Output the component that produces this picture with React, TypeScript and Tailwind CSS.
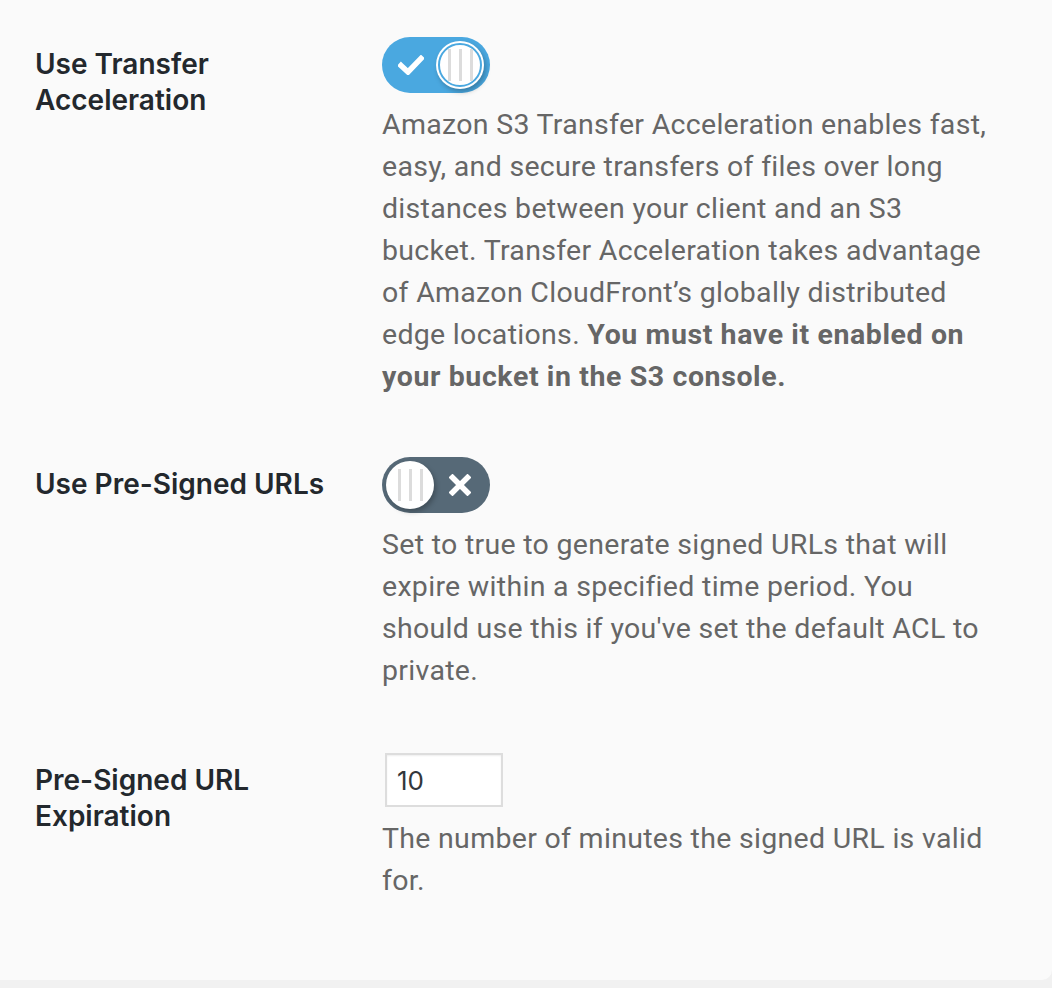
import type { ReactNode } from 'react';

const labelFont = { fontFamily: 'Inter, "Liberation Sans", sans-serif' };
const bodyFont = { fontFamily: 'Roboto, "Liberation Sans", sans-serif' };

const KnobLines = () => (
  <div className="flex h-full w-full items-center justify-center gap-[8px]">
    <span className="h-[32px] w-[3px] bg-[#dcdcdc]" />
    <span className="h-[32px] w-[3px] bg-[#dcdcdc]" />
    <span className="h-[32px] w-[3px] bg-[#dcdcdc]" />
  </div>
);

const Toggle = ({ on }: { on: boolean }) => (
  <div
    className={
      on
        ? 'relative h-[56px] w-[108px] rounded-full bg-[#4aa8e0]'
        : 'relative h-[56px] w-[108px] rounded-full bg-[#566977]'
    }
  >
    {on ? (
      <svg
        className="absolute left-[16px] top-[18px]"
        width="26"
        height="20"
        viewBox="0 0 26 20"
        fill="none"
      >
        <path
          d="M3 10.5 L10 17 L23 3.5"
          stroke="white"
          strokeWidth="5.5"
          strokeLinecap="square"
        />
      </svg>
    ) : (
      <svg
        className="absolute left-[67px] top-[17px]"
        width="22"
        height="22"
        viewBox="0 0 22 22"
        fill="none"
      >
        <path
          d="M3.5 3.5 L18.5 18.5 M18.5 3.5 L3.5 18.5"
          stroke="white"
          strokeWidth="5.5"
          strokeLinecap="square"
        />
      </svg>
    )}
    <div
      className={
        on
          ? 'absolute left-[54px] top-[4px] h-[48px] w-[48px] rounded-full bg-white p-[2px] shadow-[2px_3px_5px_rgba(0,0,0,0.25)]'
          : 'absolute left-[4px] top-[4px] h-[48px] w-[48px] rounded-full bg-white shadow-[2px_3px_5px_rgba(0,0,0,0.25)]'
      }
    >
      {on ? (
        <div className="h-full w-full rounded-full border-[2.5px] border-[#4aa8e0] bg-white">
          <KnobLines />
        </div>
      ) : (
        <KnobLines />
      )}
    </div>
  </div>
);

const Row = ({
  label,
  control,
  children,
  className,
}: {
  label: ReactNode;
  control: ReactNode;
  children: ReactNode;
  className?: string;
}) => (
  <div className={`flex ${className ?? ''}`}>
    <div
      className="w-[382px] shrink-0 pl-[35px] pt-[9px] text-[28px] font-semibold leading-[36px] text-[#23282d]"
      style={labelFont}
    >
      {label}
    </div>
    <div className="flex flex-col">
      {control}
      <p
        className="mt-[11px] whitespace-nowrap text-[28.5px] leading-[42px] tracking-[0.3px] text-[#666666]"
        style={bodyFont}
      >
        {children}
      </p>
    </div>
  </div>
);

export default function App() {
  return (
    <div className="min-h-screen bg-[#f1f1f1]">
      <div className="rounded-br-[10px] bg-[#fafafa] pb-[78px] pt-[37px]">
        <Row
          label={
            <>
              Use Transfer
              <br />
              Acceleration
            </>
          }
          control={<Toggle on />}
        >
          Amazon S3 Transfer Acceleration enables fast,
          <br />
          easy, and secure transfers of files over long
          <br />
          distances between your client and an S3
          <br />
          bucket. Transfer Acceleration takes advantage
          <br />
          of Amazon CloudFront’s globally distributed
          <br />
          edge locations.{' '}
          <strong className="font-bold tracking-[0.6px]">You must have it enabled on</strong>
          <br />
          <strong className="font-bold tracking-[0.6px]">your bucket in the S3 console.</strong>
        </Row>

        <Row
          className="mt-[59px]"
          label="Use Pre-Signed URLs"
          control={<Toggle on={false} />}
        >
          Set to true to generate signed URLs that will
          <br />
          expire within a specified time period. You
          <br />
          should use this if you've set the default ACL to
          <br />
          private.
        </Row>

        <Row
          className="mt-[61px]"
          label={
            <>
              Pre-Signed URL
              <br />
              Expiration
            </>
          }
          control={
            <input
              type="text"
              defaultValue="10"
              className="ml-[3px] h-[54px] w-[118px] border-2 border-[#dddddd] bg-white px-[10px] text-[26px] text-[#32373c] shadow-[inset_0_1px_2px_rgba(0,0,0,0.07)] outline-none"
              style={labelFont}
            />
          }
        >
          The number of minutes the signed URL is valid
          <br />
          for.
        </Row>
      </div>
    </div>
  );
}
